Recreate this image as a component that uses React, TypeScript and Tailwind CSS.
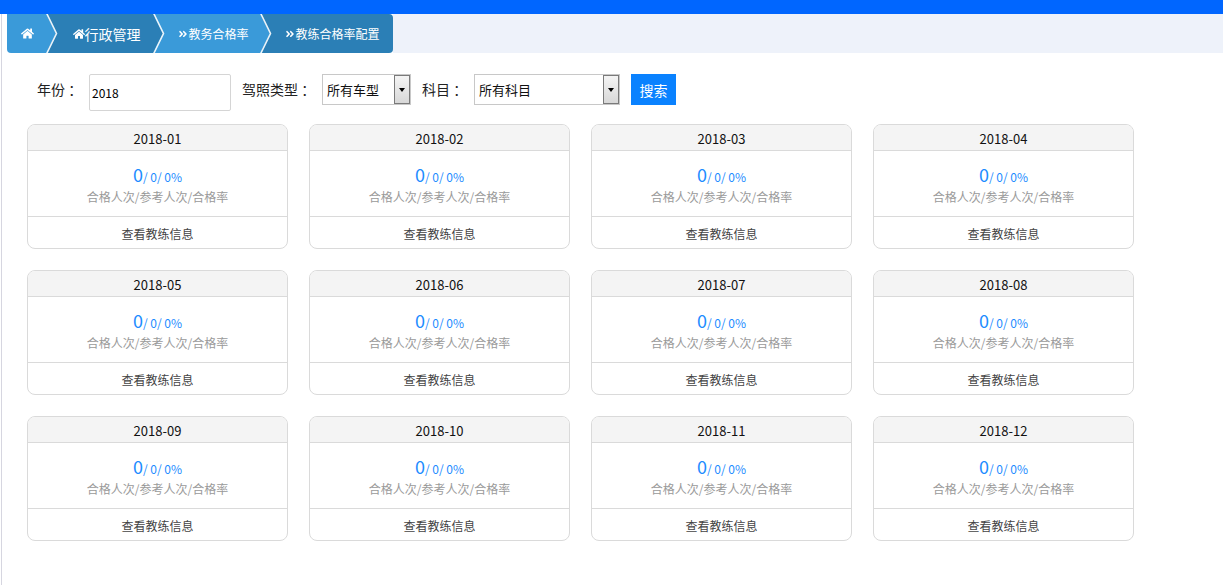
import { FaHome, FaAngleDoubleRight } from "react-icons/fa";

const months = ["01", "02", "03", "04", "05", "06", "07", "08", "09", "10", "11", "12"];

function Chevron({ color }: { color: string }) {
  return (
    <svg
      className="absolute top-0 right-[-10px] z-10"
      width="12"
      height="39"
      viewBox="0 0 12 39"
    >
      <polygon points="0,0 10,19.5 0,39" fill={color} />
      <polyline
        points="0.5,-1 10.5,19.5 0.5,40"
        fill="none"
        stroke="#ffffff"
        strokeWidth="1.6"
        opacity="0.9"
      />
    </svg>
  );
}

function Breadcrumb() {
  const light = "#3a9ad9";
  const dark = "#2b7fb6";
  return (
    <div className="flex h-[39px] bg-[#eef2fa]">
      <div className="bg-white pl-[5px]">
        <div className="flex h-[39px] rounded-b-[4px] rounded-tr-[4px] text-white">
          <div className="relative flex w-[41px] items-center justify-center rounded-bl-[4px] bg-[#3a9ad9]">
            <FaHome className="text-[13px]" />
            <Chevron color={light} />
          </div>
          <div className="relative flex w-[107px] items-center justify-center pl-[10px] bg-[#2b7fb6] text-[14px]">
            <FaHome className="text-[12px]" />
            <span className="leading-none">行政管理</span>
            <Chevron color={dark} />
          </div>
          <div className="relative flex w-[107px] items-center justify-center pl-[10px] bg-[#3a9ad9] text-[12px]">
            <FaAngleDoubleRight className="text-[10px]" />
            <span className="leading-none">教务合格率</span>
            <Chevron color={light} />
          </div>
          <div className="flex w-[131px] items-center justify-center pl-[10px] bg-[#2b7fb6] text-[12px] rounded-r-[4px]">
            <FaAngleDoubleRight className="text-[10px]" />
            <span className="leading-none">教练合格率配置</span>
          </div>
        </div>
      </div>
      <div className="flex-1" />
    </div>
  );
}

function FakeSelect({ width, value }: { width: string; value: string }) {
  return (
    <div className={`flex h-[31px] ${width} border border-[#c8c8c8] bg-white`}>
      <div className="flex flex-1 items-center pl-[4px] pb-[1px] text-[13px] text-[#111] leading-none">{value}</div>
      <div className="flex w-[16px] items-center justify-center border border-[#7a7a7a] bg-[linear-gradient(#f4f4f4,#d8d8d8)]">
        <span className="block h-0 w-0 border-x-[3.5px] border-t-[4px] border-x-transparent border-t-black" />
      </div>
    </div>
  );
}

function Filters() {
  return (
    <div className="mt-[21px] ml-[35px] flex items-start text-[14px] text-[#222]">
      <div className="flex h-[31px] w-[52px] items-center pb-[2px] leading-none">年份 ：</div>
      <div className="flex h-[37px] w-[142px] items-center rounded-[2px] border border-[#d5d5d5] pl-[2px] pt-[1px] text-[12px] text-black leading-none">
        2018
      </div>
      <div className="ml-[11px] flex h-[31px] w-[80px] items-center pb-[2px] leading-none">驾照类型 ：</div>
      <FakeSelect width="w-[89px]" value="所有车型" />
      <div className="ml-[11px] flex h-[31px] w-[52px] items-center pb-[2px] leading-none">科目 ：</div>
      <FakeSelect width="w-[146px]" value="所有科目" />
      <button className="ml-[11px] flex h-[31px] w-[45px] items-center justify-center bg-[#0a82ff] text-[14px] text-white leading-none">
        搜索
      </button>
    </div>
  );
}

function MonthCard({ month }: { month: string }) {
  return (
    <div className="flex h-[125px] flex-col overflow-hidden rounded-[8px] border border-[#dadada] bg-white">
      <div className="flex h-[26px] items-center justify-center border-b border-[#dadada] bg-[#f4f4f4] pt-[2px] text-[13px] text-[#111] leading-none">
        2018-{month}
      </div>
      <div className="flex h-[66px] flex-col items-center border-b border-[#dadada]">
        <div className="mt-[14px] flex items-baseline text-[#1e8cff] leading-none">
          <span className="text-[18px]">0</span>
          <span className="text-[12px]">/ 0/ 0%</span>
        </div>
        <div className="mt-[8px] text-[12px] text-[#9a9a9a] leading-none">合格人次/参考人次/合格率</div>
      </div>
      <div className="flex flex-1 items-center justify-center pt-[2px] text-[12px] text-[#444] leading-none">
        查看教练信息
      </div>
    </div>
  );
}

export default function App() {
  return (
    <div className="h-[585px] w-full overflow-hidden bg-white font-['Noto_Sans_CJK_SC','Liberation_Sans',sans-serif]">
      <div className="h-[14px] bg-[#0066ff]" />
      <div className="ml-px h-[571px] border-l border-[#d6d6e0]">
        <Breadcrumb />
        <Filters />
        <div className="mt-[13px] ml-[25px] grid grid-cols-[261px_261px_261px_261px] gap-[21px]">
          {months.map((m) => (
            <MonthCard key={m} month={m} />
          ))}
        </div>
      </div>
    </div>
  );
}
